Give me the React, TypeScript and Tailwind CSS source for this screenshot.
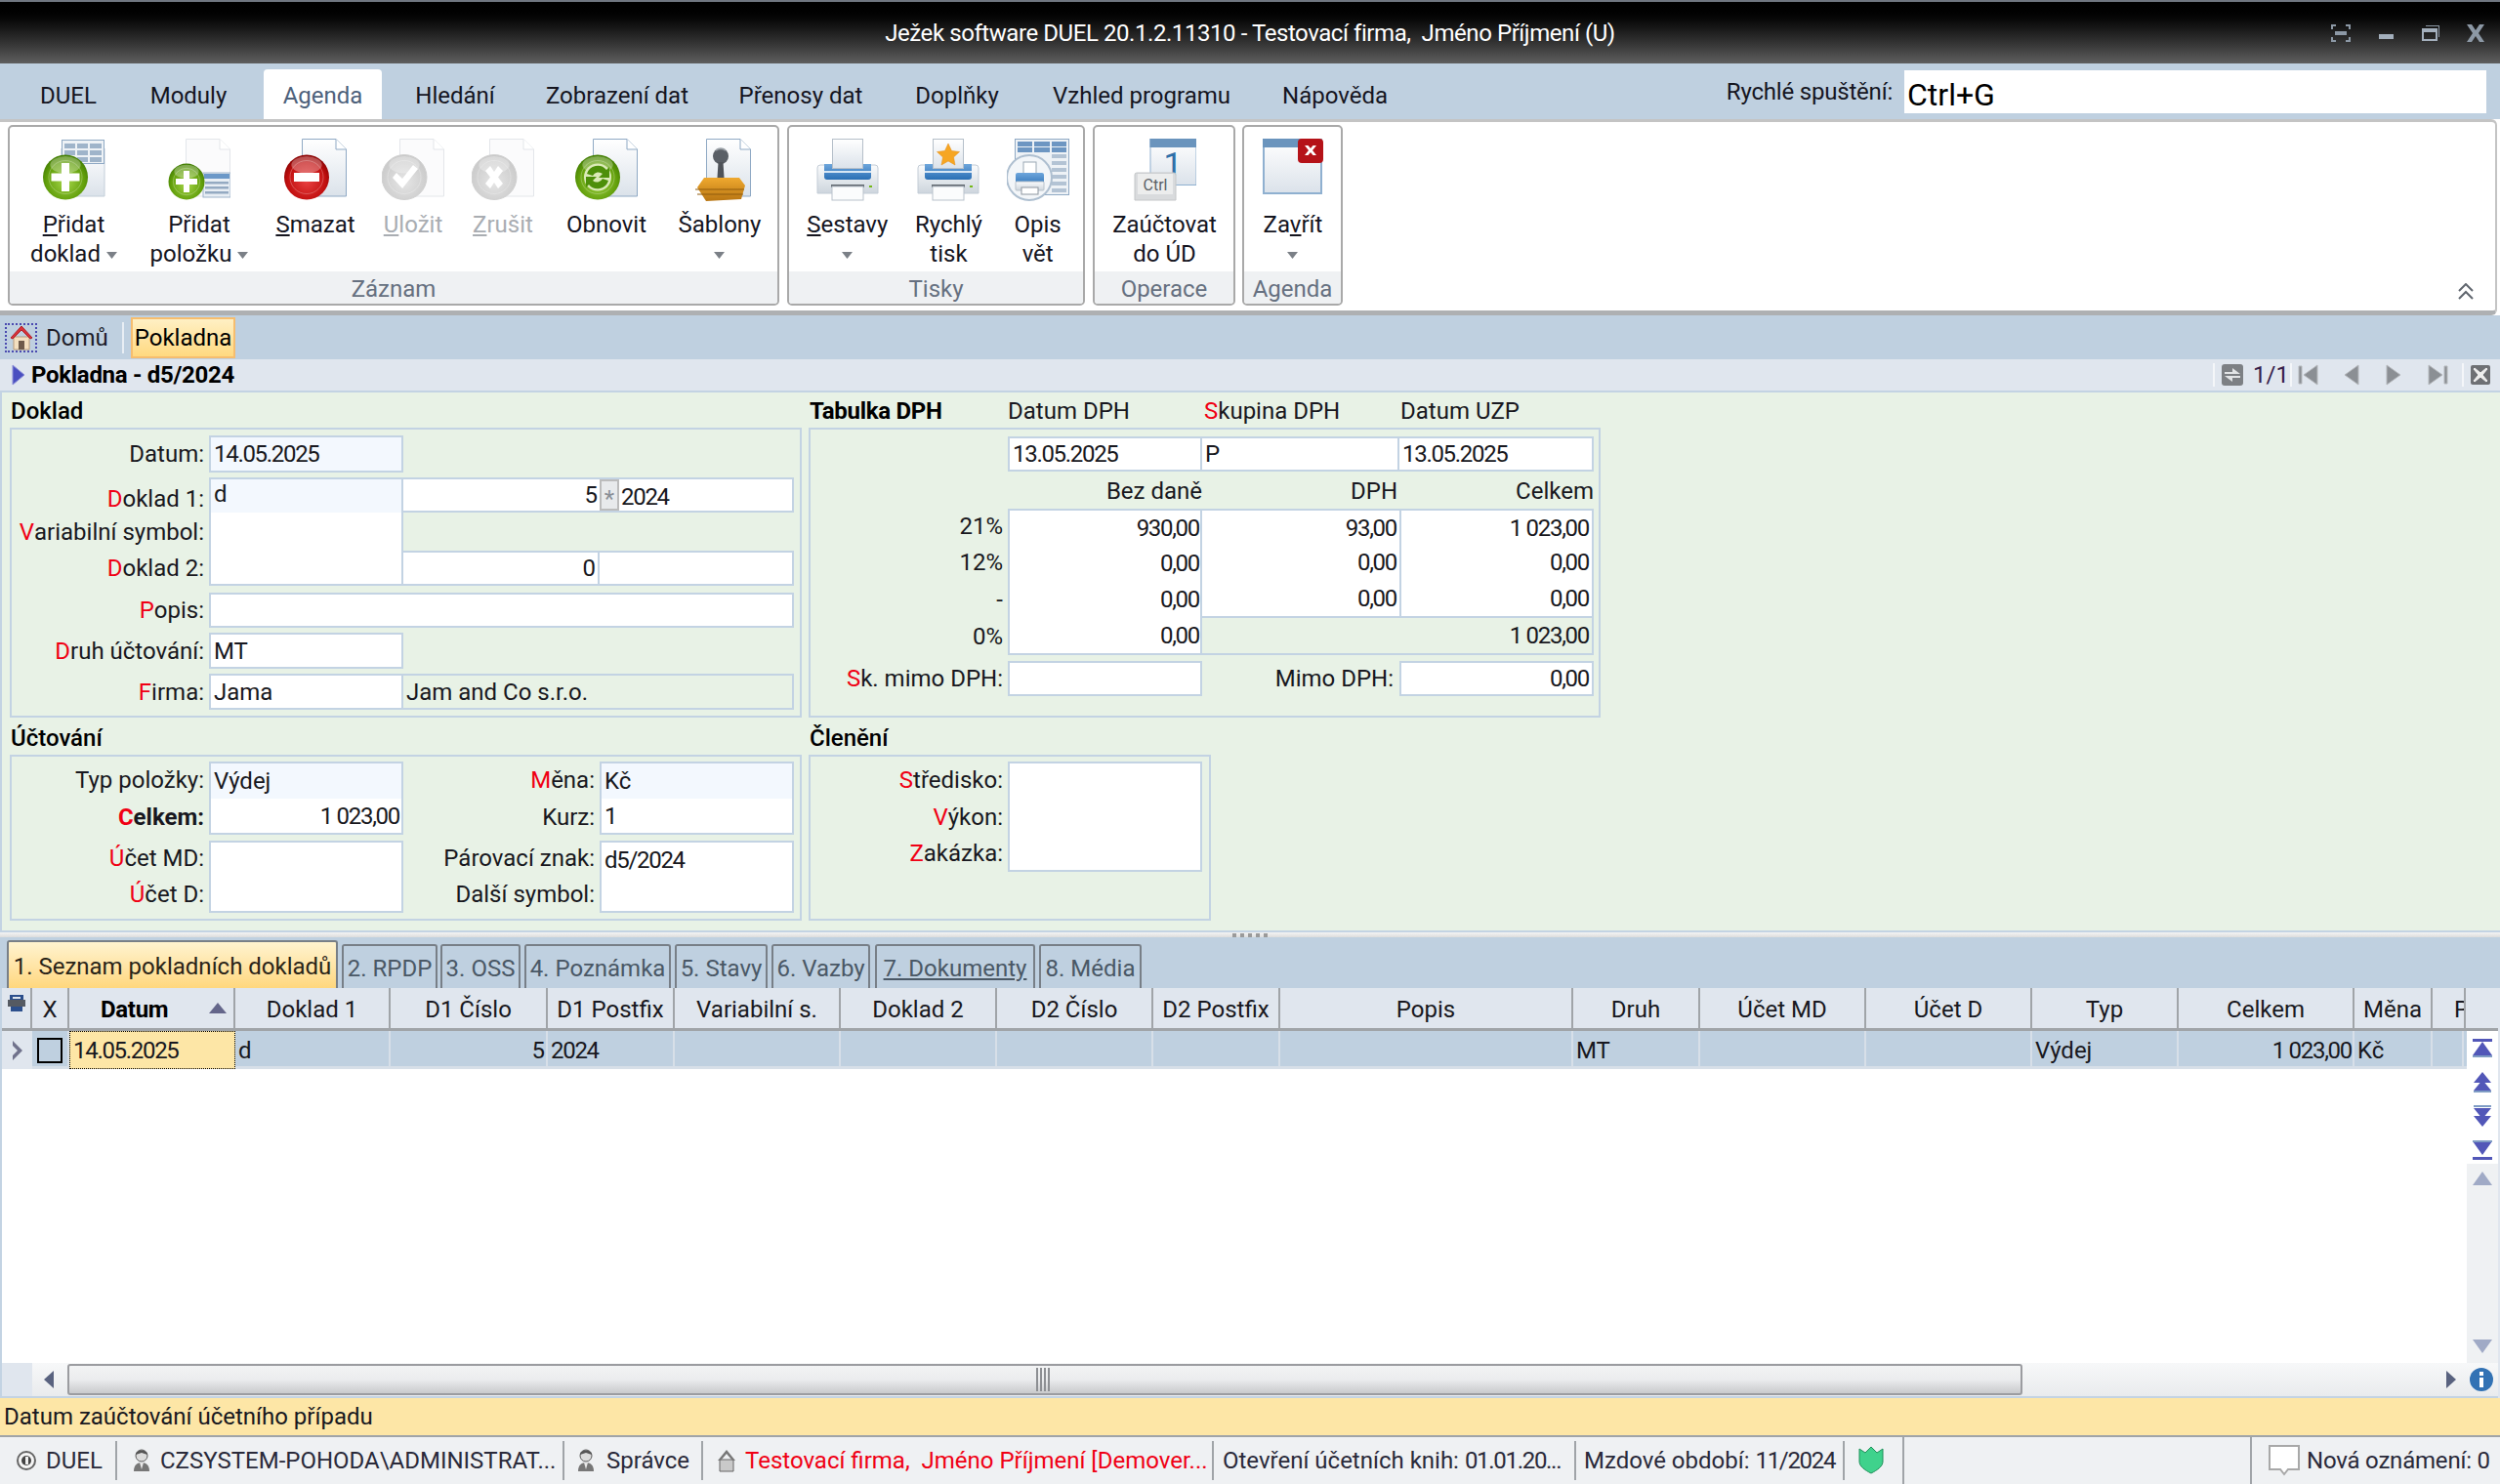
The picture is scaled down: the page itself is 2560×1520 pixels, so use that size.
import React from "react";

const HEADER_COLS = "grid-cols-[31px_38px_170px_159px_161px_130px_170px_160px_160px_130px_300px_130px_170px_170px_150px_180px_80px_34px_32px]";
const ROW_COLS = "grid-cols-[31px_38px_170px_159px_161px_130px_170px_160px_160px_130px_300px_130px_170px_170px_150px_180px_80px_32px]";
const NUM = "tracking-[-1.3px]";

const COLUMNS = ["", "X", "Datum", "Doklad 1", "D1 Číslo", "D1 Postfix", "Variabilní s.", "Doklad 2", "D2 Číslo", "D2 Postfix", "Popis", "Druh", "Účet MD", "Účet D", "Typ", "Celkem", "Měna", "P", ""];

function Gradients() {
  return (
    <svg className="absolute h-0 w-0" aria-hidden="true">
      <defs>
        <radialGradient id="g-green" cx="50%" cy="60%" r="60%">
          <stop offset="0" stopColor="#a6d64a" />
          <stop offset="0.7" stopColor="#63a00c" />
          <stop offset="1" stopColor="#3f7a00" />
        </radialGradient>
        <radialGradient id="g-red" cx="50%" cy="60%" r="60%">
          <stop offset="0" stopColor="#e84040" />
          <stop offset="0.7" stopColor="#c21010" />
          <stop offset="1" stopColor="#850000" />
        </radialGradient>
        <radialGradient id="g-gray" cx="50%" cy="60%" r="60%">
          <stop offset="0" stopColor="#e6e6e6" />
          <stop offset="1" stopColor="#c8c8c8" />
        </radialGradient>
        <linearGradient id="g-page" x1="0" y1="0" x2="0" y2="1">
          <stop offset="0" stopColor="#ffffff" />
          <stop offset="1" stopColor="#dbe2ea" />
        </linearGradient>
        <linearGradient id="g-blue" x1="0" y1="0" x2="0" y2="1">
          <stop offset="0" stopColor="#6ea6dc" />
          <stop offset="1" stopColor="#2a6fb5" />
        </linearGradient>
        <linearGradient id="g-body" x1="0" y1="0" x2="0" y2="1">
          <stop offset="0" stopColor="#fafbfc" />
          <stop offset="1" stopColor="#cdd5dd" />
        </linearGradient>
        <linearGradient id="g-stamp" x1="0" y1="0" x2="0" y2="1">
          <stop offset="0" stopColor="#efa92f" />
          <stop offset="1" stopColor="#b87512" />
        </linearGradient>
      </defs>
    </svg>
  );
}

function Page({ muted = false }: { muted?: boolean }) {
  const line = muted ? "#e3e6ea" : "#8fa9c4";
  return (
    <g>
      <path d="M18.5 .5H53L63.5 11V59H18.5Z" fill={muted ? "#fbfbfc" : "url(#g-page)"} stroke={line} />
      <path d="M53 .5V11H63.5" fill="#fff" stroke={line} />
    </g>
  );
}

function Ball({ fill, cx = 23, cy = 39.5, r = 23 }: { fill: string; cx?: number; cy?: number; r?: number }) {
  return (
    <g>
      <circle cx={cx} cy={cy} r={r} fill={`url(#${fill})`} stroke={fill === "g-gray" ? "#d0d0d0" : "none"} />
      <ellipse cx={cx} cy={cy - r * 0.55} rx={r * 0.68} ry={r * 0.38} fill="#fff" opacity="0.3" />
      <circle cx={cx} cy={cy} r={r * 0.74} fill="none" stroke="#fff" strokeOpacity="0.25" />
    </g>
  );
}

function Icon({ children, w = 64 }: { children: React.ReactNode; w?: number }) {
  return (
    <svg width={w} height="64" viewBox="0 0 64 64" className="block">
      {children}
    </svg>
  );
}

function AddDocIcon() {
  return (
    <Icon>
      <path d="M19 10H63V59H19Z" fill="url(#g-page)" stroke="#c3ced9" />
      <rect x="19.5" y="1.5" width="43" height="24" fill="#eef2f6" stroke="#8fa9c4" />
      {[5, 12, 19].map((y) => (
        <g key={y}>
          <rect x="22" y={y} width="11" height="5" fill="#9fb4ca" />
          <rect x="35" y={y} width="11" height="5" fill="#9fb4ca" />
          <rect x="48" y={y} width="12" height="5" fill="#9fb4ca" />
        </g>
      ))}
      <Ball fill="g-green" />
      <path d="M19 25h8v10.5h10.5v8H27V54h-8V43.5H8.5v-8H19Z" fill="#fff" />
    </Icon>
  );
}

function AddItemIcon() {
  return (
    <Icon>
      <Page muted />
      <rect x="36" y="35" width="28" height="25" fill="#e8eef4" stroke="#9fb4ca" />
      <rect x="37" y="36" width="26" height="5" fill="#6b98c8" />
      {[44, 49, 54].map((y) => (
        <rect key={y} x="38" y={y} width="24" height="2.5" fill="#94aac2" />
      ))}
      <Ball fill="g-green" cx={19} cy={44} r={18.5} />
      <path d="M16 33h6v8h8v6h-8v8h-6v-8H8v-6h8Z" fill="#fff" />
    </Icon>
  );
}

function DeleteIcon() {
  return (
    <Icon>
      <Page />
      <Ball fill="g-red" />
      <rect x="10" y="35" width="26" height="9" fill="#fff" />
    </Icon>
  );
}

function SaveDisabledIcon() {
  return (
    <Icon>
      <Page muted />
      <Ball fill="g-gray" />
      <path d="M11 40l4-5 6 6 11-14 5 4-16 20Z" fill="#fff" />
    </Icon>
  );
}

function CancelDisabledIcon() {
  return (
    <Icon>
      <Page muted />
      <Ball fill="g-gray" />
      <path d="M14 33l5-5 4 6 4-6 5 5-5 6.500 5 6.500-5 5-4-6-4 6-5-5 5-6.500Z" fill="#fff" />
    </Icon>
  );
}

function RefreshIcon() {
  return (
    <Icon>
      <Page />
      <Ball fill="g-green" />
      <circle cx="23" cy="39.500" r="14" fill="#dbeab8" />
      <path d="M12 36a11.500 11.500 0 0 1 20-4l3-3v11H24l4-4a6.500 6.500 0 0 0-10 2Z" fill="#4d8f0a" />
      <path d="M34 43a11.500 11.500 0 0 1-20 4l-3 3V39h11l-4 4a6.500 6.500 0 0 0 10-2Z" fill="#4d8f0a" />
    </Icon>
  );
}

function TemplateIcon() {
  return (
    <Icon>
      <Page />
      <circle cx="33" cy="18" r="8" fill="#5a5f66" />
      <path d="M28 12c3-2 7-2 10 0" fill="none" stroke="#9aa0a6" strokeWidth="2" />
      <path d="M30.500 24h5l1 16h-7Z" fill="#4f5359" />
      <path d="M9 50l7-10h36l6 8-4 14-36 2Z" fill="url(#g-stamp)" />
      <path d="M7 52h50M9 57h47" stroke="#8f5a0c" strokeWidth="1" fill="none" />
    </Icon>
  );
}

function PrinterBase() {
  return (
    <g>
      <path d="M1 30a3 3 0 0 1 3-3h56a3 3 0 0 1 3 3v26H1Z" fill="url(#g-body)" stroke="#c3ccd6" />
      <path d="M8 26h48v13a3 3 0 0 1-3 3H11a3 3 0 0 1-3-3Z" fill="url(#g-blue)" />
      <rect x="8" y="33" width="48" height="2" fill="#d7e6f4" />
      <rect x="15" y="47" width="34" height="3" fill="#60676e" />
      <rect x="16" y="49" width="32" height="14" fill="#fbfcfd" stroke="#b9c2cb" />
      <rect x="54" y="48" width="3" height="2" fill="#74b816" />
    </g>
  );
}

function PrinterIcon({ star = false }: { star?: boolean }) {
  return (
    <Icon>
      <PrinterBase />
      <rect x="16.500" y=".5" width="31" height="30" fill="url(#g-page)" stroke="#b5bfc9" />
      {star && <path d="M32 5l3.500 7.500 8 1-6 5.500 1.500 8-7-4-7 4 1.500-8-6-5.500 8-1Z" fill="#f6a623" stroke="#e58a10" strokeWidth=".5" />}
    </Icon>
  );
}

function DescribeIcon() {
  return (
    <Icon>
      <rect x="8.500" y=".5" width="55" height="57" fill="#eef2f6" stroke="#8fa9c4" />
      {[3, 9].map((y) => (
        <g key={y}>
          <rect x="11" y={y} width="15" height="5" fill="#6d96c2" />
          <rect x="28" y={y} width="16" height="5" fill="#6d96c2" />
          <rect x="46" y={y} width="15" height="5" fill="#6d96c2" />
        </g>
      ))}
      {[16, 23, 30, 37, 44, 51].map((y) => (
        <rect key={y} x="46" y={y} width="15" height="4" fill="#b3c3d4" />
      ))}
      <circle cx="23" cy="40" r="23" fill="#f3f6f9" stroke="#aebfd0" strokeWidth="2" />
      <rect x="17" y="24" width="13" height="13" fill="#fff" stroke="#9aa7b4" />
      <rect x="9" y="35" width="29" height="14" rx="2" fill="url(#g-blue)" />
      <rect x="9" y="44" width="29" height="9" rx="1" fill="url(#g-body)" stroke="#b9c2cb" />
      <rect x="15" y="50" width="17" height="7" fill="#fff" stroke="#8d969f" />
    </Icon>
  );
}

function PostIcon() {
  return (
    <Icon>
      <rect x="17" y=".5" width="47" height="47" fill="url(#g-page)" stroke="#8fb0d0" />
      <rect x="16.500" y="0" width="47.500" height="9" fill="#6a94bd" />
      <text x="40" y="38" fontSize="34" fontFamily="Roboto, sans-serif" fill="#2f6fa8" textAnchor="middle">1</text>
      <path d="M1 37a2 2 0 0 1 2-2h38a2 2 0 0 1 2 2v26H1Z" fill="#d9dbdd" stroke="#c4c6c8" />
      <rect x="4" y="36" width="36" height="21" fill="#eceded" />
      <text x="22" y="53" fontSize="16" fontFamily="Roboto, sans-serif" fill="#5a5f66" textAnchor="middle">Ctrl</text>
    </Icon>
  );
}

function CloseWindowIcon() {
  return (
    <Icon>
      <rect x="2" y="1" width="59" height="55" fill="url(#g-page)" stroke="#8fb0d0" strokeWidth="2" />
      <rect x="1" y="0" width="54" height="9" fill="#6a94bd" />
      <rect x="37" y="0" width="26" height="25" rx="4" fill="#b51218" />
      <path d="M44 7h3.500l2.500 3 2.500-3H56l-4 5 4 5h-3.500L50 14l-2.500 3H44l4-5Z" fill="#fff" />
    </Icon>
  );
}

function DropArrow() {
  return (
    <svg width="11" height="8" viewBox="0 0 11 8" className="inline-block">
      <path d="M0 0h11L5.500 7Z" fill="#7b8087" />
    </svg>
  );
}

function RibbonButton({ icon, w, disabled, children }: { icon: React.ReactNode; w: string; disabled?: boolean; children: React.ReactNode }) {
  return (
    <div className={`flex ${w} flex-col items-center pt-[12px]`}>
      <div className="h-[64px]">{icon}</div>
      <div className={`mt-[9px] text-center leading-[30px] ${disabled ? "text-[#a9adb2]" : "text-[#15151f]"}`}>{children}</div>
    </div>
  );
}

function RibbonGroup({ title, w, children }: { title: string; w: string; children: React.ReactNode }) {
  return (
    <div className={`${w} flex h-[185px] flex-col overflow-hidden rounded-[5px] border-2 border-[#a9a9a9] bg-white`}>
      <div className="flex h-[148px] pl-px">{children}</div>
      <div className="flex h-[33px] items-center justify-center bg-[#eff1f3] pt-[3px] text-[#667080]">{title}</div>
    </div>
  );
}

function Ribbon() {
  return (
    <div className="mr-[3px] flex h-[201px] rounded-r-[6px] border-t-[3px] border-r-2 border-b-[5px] border-t-[#c4c4c4] border-r-[#c4c4c4] border-b-[#aeb0b2] bg-white pl-[8px] pt-[3px]">
      <RibbonGroup title="Záznam" w="w-[790px]">
        <RibbonButton w="w-[129px]" icon={<AddDocIcon />}><u>P</u>řidat<br />doklad <DropArrow /></RibbonButton>
        <RibbonButton w="w-[128px]" icon={<AddItemIcon />}>Přidat<br />položku <DropArrow /></RibbonButton>
        <RibbonButton w="w-[110px]" icon={<DeleteIcon />}><u>S</u>mazat</RibbonButton>
        <RibbonButton w="w-[90px]" disabled icon={<SaveDisabledIcon />}><u>U</u>ložit</RibbonButton>
        <RibbonButton w="w-[94px]" disabled icon={<CancelDisabledIcon />}><u>Z</u>rušit</RibbonButton>
        <RibbonButton w="w-[118px]" icon={<RefreshIcon />}>Obnovit</RibbonButton>
        <RibbonButton w="w-[114px]" icon={<TemplateIcon />}>Šablony<br /><DropArrow /></RibbonButton>
      </RibbonGroup>
      <div className="ml-[8px]">
        <RibbonGroup title="Tisky" w="w-[305px]">
          <RibbonButton w="w-[118px]" icon={<PrinterIcon />}><u>S</u>estavy<br /><DropArrow /></RibbonButton>
          <RibbonButton w="w-[90px]" icon={<PrinterIcon star />}>Rychlý<br />tisk</RibbonButton>
          <RibbonButton w="w-[93px]" icon={<DescribeIcon />}>Opis<br />vět</RibbonButton>
        </RibbonGroup>
      </div>
      <div className="ml-[8px]">
        <RibbonGroup title="Operace" w="w-[146px]">
          <RibbonButton w="w-[142px]" icon={<PostIcon />}>Zaúčtovat<br />do ÚD</RibbonButton>
        </RibbonGroup>
      </div>
      <div className="ml-[7px]">
        <RibbonGroup title="Agenda" w="w-[103px]">
          <RibbonButton w="w-[99px]" icon={<CloseWindowIcon />}>Za<u>v</u>řít<br /><DropArrow /></RibbonButton>
        </RibbonGroup>
      </div>
      <div className="mb-[10px] ml-auto mr-[22px] self-end">
        <svg width="16" height="18" viewBox="0 0 16 18">
          <path d="M1 8l7-7 7 7M1 16l7-7 7 7" fill="none" stroke="#60666e" strokeWidth="2" />
        </svg>
      </div>
    </div>
  );
}

function WindowButtons() {
  return (
    <div className="flex items-center justify-end pr-[16px]">
      <svg width="20" height="18" viewBox="0 0 20 18" className="mr-[29px]">
        <path d="M1 5V1h4M15 1h4v4M19 13v4h-4M5 17H1v-4" fill="none" stroke="#8c98a5" strokeWidth="2" />
        <rect x="4" y="7" width="12" height="4" fill="#8c98a5" />
      </svg>
      <svg width="15" height="6" viewBox="0 0 15 6" className="mr-[29px] mt-[8px]">
        <rect width="15" height="5" fill="#a3afbc" />
      </svg>
      <svg width="18" height="16" viewBox="0 0 18 16" className="mr-[28px]">
        <path d="M4 0h14v12" fill="none" stroke="#8c98a5" strokeWidth="2" />
        <rect x="1" y="4" width="14" height="11" fill="none" stroke="#a3afbc" strokeWidth="2" />
        <rect x="1" y="4" width="14" height="3" fill="#a3afbc" />
      </svg>
      <svg width="18" height="18" viewBox="0 0 18 18">
        <path d="M0 0h5l4 6 4-6h5l-6 9 6 9h-5l-4-6-4 6H0l6-9Z" fill="#8c98a5" />
      </svg>
    </div>
  );
}

function TitleBar() {
  return (
    <div className="grid h-[65px] grid-cols-[1fr_auto_1fr] items-center border-t-2 border-t-[#6f7680] bg-gradient-to-b from-[#000000] to-[#5f5f5f]">
      <div />
      <div className="whitespace-pre tracking-[-0.43px] text-white">Ježek software DUEL 20.1.2.11310 - Testovací firma,  Jméno Příjmení (U)</div>
      <WindowButtons />
    </div>
  );
}

function MenuRow() {
  return (
    <div className="flex h-[57px] bg-[#bfd0e0] pl-[16px] text-[#15151f]">
      <div className="flex w-[108px] items-center justify-center pt-[9px]">DUEL</div>
      <div className="flex w-[138px] items-center justify-center pt-[9px]">Moduly</div>
      <div className="ml-[8px] mt-[6px] flex w-[121px] items-center justify-center rounded-t-[4px] bg-white pt-[3px] text-[#4d617b]">Agenda</div>
      <div className="flex w-[150px] items-center justify-center pt-[9px]">Hledání</div>
      <div className="flex w-[182px] items-center justify-center pt-[9px]">Zobrazení dat</div>
      <div className="flex w-[194px] items-center justify-center pt-[9px]">Přenosy dat</div>
      <div className="flex w-[126px] items-center justify-center pt-[9px]">Doplňky</div>
      <div className="flex w-[252px] items-center justify-center pt-[9px]">Vzhled programu</div>
      <div className="flex w-[144px] items-center justify-center pt-[9px]">Nápověda</div>
      <div className="ml-auto flex items-start">
        <span className="mr-[12px] mt-[11px] tracking-[-0.2px]">Rychlé spuštění:</span>
        <div className="mr-[14px] mt-[7px] flex h-[44px] w-[596px] items-center bg-white pl-[3px] pt-[5px] text-[32px] text-black">Ctrl+G</div>
      </div>
    </div>
  );
}

function NavIcon({ d, className }: { d: string; className: string }) {
  return (
    <svg width="22" height="22" viewBox="0 0 22 22" className={className}>
      <path d={d} fill="#8b8f94" stroke="#b5b8bc" />
    </svg>
  );
}

function TabStrip() {
  return (
    <div className="flex h-[45px] items-center bg-[#bfd0e0] pl-[5px] text-[#1c1c28]">
      <div className="flex h-[30px] w-[33px] items-center justify-center border-2 border-dotted border-[#4a4ab0]">
        <svg width="24" height="26" viewBox="0 0 24 26">
          <path d="M4 12h16v13H4Z" fill="#f3dfc0" stroke="#b99a78" />
          <rect x="9" y="16" width="6" height="9" fill="#6e5a4a" />
          <path d="M12 1L1 13l2 1L12 5l9 9 2-1Z" fill="#d8323a" stroke="#b02028" />
        </svg>
      </div>
      <span className="ml-[9px] w-[66px]">Domů</span>
      <div className="ml-[12px] h-[32px] w-[2px] bg-[#e8eef4]" />
      <div className="ml-[7px] flex h-[42px] w-[107px] items-center justify-center border-2 border-[#f6bd6e] bg-gradient-to-b from-[#fff0c4] to-[#ffd97f] text-black">Pokladna</div>
    </div>
  );
}

function RecordBar() {
  return (
    <div className="flex h-[32px] items-center bg-[#e0e6ee] pl-[12px]">
      <svg width="14" height="22" viewBox="0 0 14 22">
        <path d="M1 1l12 10L1 21Z" fill="#4a4fc0" stroke="#8d90d8" />
      </svg>
      <span className="ml-[6px] font-bold tracking-[-0.3px] text-black">Pokladna - d5/2024</span>
      <div className="ml-auto flex items-center pr-[10px]">
        <div className="mr-[7px] h-[24px] w-[2px] bg-[#f4f6f9]" />
        <svg width="22" height="22" viewBox="0 0 22 22">
          <rect width="22" height="22" rx="3" fill="#7d8084" />
          <path d="M3 8h8V4l8 6h-16M19 14h-8v4l-8-6h16" fill="#e2e4e6" />
        </svg>
        <span className="ml-[10px] w-[30px] text-[#36204a]">1/1</span>
        <div className="ml-[8px] mr-[6px] h-[24px] w-[2px] bg-[#f4f6f9]" />
        <NavIcon className="mr-[23px]" d="M1 2h3v18H1ZM20 1v20L6 11Z" />
        <NavIcon className="mr-[20px]" d="M17 1v20L3 11Z" />
        <NavIcon className="mr-[23px]" d="M4 1v20L18 11Z" />
        <NavIcon className="mr-[14px]" d="M2 1v20L16 11ZM18 2h3v18h-3Z" />
        <div className="mr-[7px] h-[24px] w-[2px] bg-[#f4f6f9]" />
        <svg width="20" height="20" viewBox="0 0 20 20">
          <rect width="20" height="20" rx="2" fill="#6e7074" />
          <path d="M4 3l6 5 6-5 1 1-5 6 5 6-1 1-6-5-6 5-1-1 5-6-5-6Z" fill="#eeeeee" stroke="#eeeeee" />
        </svg>
      </div>
    </div>
  );
}

function Label({ red, text, bold, className = "" }: { red?: string; text: string; bold?: boolean; className?: string }) {
  return (
    <div className={`flex items-center justify-end whitespace-pre text-[#181820] ${bold ? "font-bold" : ""} ${className}`}>
      <span className="text-[#f00014]">{red}</span>
      {text}
    </div>
  );
}

function Cell({ children, className = "" }: { children?: React.ReactNode; className?: string }) {
  return <div className={`flex items-center whitespace-pre border-2 border-[#c3d3e3] px-[3px] text-[#181820] ${className}`}>{children}</div>;
}

function Section({ title, bold, className = "", head, children }: { title: string; bold?: boolean; className?: string; head?: React.ReactNode; children: React.ReactNode }) {
  return (
    <div className={className}>
      <div className="flex h-[38px] items-center pt-[4px] pl-px">
        <span className={`text-black ${bold ? "w-[203px] font-bold tracking-[-0.3px]" : "font-medium"}`}>{title}</span>
        {head}
      </div>
      {children}
    </div>
  );
}

function DokladBox() {
  return (
    <div className="grid h-[297px] grid-cols-[197px_5px_199px_201px_199px] grid-rows-[38px_5px_36px_39px_36px_7px_36px_5px_37px_5px_37px] border-2 border-[#c3d3e3] pt-[6px]">
      <Label className="col-start-1 row-start-1" text="Datum:" />
      <Cell className={`col-start-3 row-start-1 bg-[#f3f8fe] ${NUM}`}>14.05.2025</Cell>

      <Label className="col-start-1 row-start-3 pt-[8px]" red="D" text="oklad 1:" />
      <Label className="col-start-1 row-start-4" red="V" text="ariabilní symbol:" />
      <Label className="col-start-1 row-start-5" red="D" text="oklad 2:" />
      <div className="col-start-3 row-span-3 row-start-3 flex flex-col border-2 border-[#c3d3e3] bg-white">
        <div className="flex h-[34px] bg-[#f3f8fe] pl-[3px] leading-[30px] text-[#181820]">d</div>
      </div>
      <Cell className="col-start-4 row-start-3 justify-end border-l-0 border-r-0 bg-white !px-[2px]">5</Cell>
      <div className="col-start-5 row-start-3 flex overflow-hidden border-2 border-l-0 border-[#c3d3e3] bg-white">
        <div className="flex h-full w-[20px] justify-center border-2 border-[#bcbcbc] bg-[#e8eaec] text-[#8a8f96]">*</div>
        <span className={`pl-[2px] text-[#181820] ${NUM}`}>2024</span>
      </div>
      <Cell className="col-start-4 row-start-5 justify-end border-l-0 bg-white !px-[2px]">0</Cell>
      <Cell className="col-start-5 row-start-5 border-l-0 bg-white" />

      <Label className="col-start-1 row-start-7" red="P" text="opis:" />
      <Cell className="col-span-3 col-start-3 row-start-7 bg-white" />

      <Label className="col-start-1 row-start-9" red="D" text="ruh účtování:" />
      <Cell className="col-start-3 row-start-9 bg-white">MT</Cell>

      <Label className="col-start-1 row-start-11" red="F" text="irma:" />
      <Cell className="col-start-3 row-start-11 bg-white">Jama</Cell>
      <Cell className="col-span-2 col-start-4 row-start-11 border-l-0">Jam and Co s.r.o.</Cell>
    </div>
  );
}

function ValueColumn({ rows, pad, className = "" }: { rows: [string, string][]; pad: string; className?: string }) {
  return (
    <div className={`flex flex-col border-2 border-[#c3d3e3] bg-white ${className}`}>
      {rows.map(([h, v], i) => (
        <div key={i} className={`flex ${h} ${pad} items-center justify-end text-[#181820] ${NUM}`}>{v}</div>
      ))}
    </div>
  );
}

function DphBox() {
  return (
    <div className="grid h-[297px] grid-cols-[197px_5px_199px_202px_199px] grid-rows-[36px_38px_36px_37px_39px_38px_6px_36px] border-2 border-[#c3d3e3] pt-[7px]">
      <Cell className={`col-start-3 row-start-1 bg-white ${NUM}`}>13.05.2025</Cell>
      <Cell className="col-start-4 row-start-1 border-l-0 bg-white">P</Cell>
      <Cell className={`col-start-5 row-start-1 border-l-0 bg-white ${NUM}`}>13.05.2025</Cell>

      <div className="col-start-3 row-start-2 flex items-center justify-end pt-[2px] text-[#181820]">Bez daně</div>
      <div className="col-start-4 row-start-2 flex items-center justify-end pr-[2px] pt-[2px] text-[#181820]">DPH</div>
      <div className="col-start-5 row-start-2 flex items-center justify-end pt-[2px] text-[#181820]">Celkem</div>

      <Label className="col-start-1 row-start-3" text="21%" />
      <Label className="col-start-1 row-start-4" text="12%" />
      <Label className="col-start-1 row-start-5" text="-" />
      <Label className="col-start-1 row-start-6" text="0%" />

      <ValueColumn
        pad="pr-[1px]"
        className="col-start-3 row-span-4 row-start-3"
        rows={[["h-[35px]", "930,00"], ["h-[37px]", "0,00"], ["h-[38px]", "0,00"], ["h-[36px]", "0,00"]]}
      />
      <ValueColumn
        pad="pr-[3px]"
        className="col-start-4 row-span-3 row-start-3 border-l-0 border-r-0"
        rows={[["h-[35px]", "93,00"], ["h-[37px]", "0,00"], ["h-[38px]", "0,00"]]}
      />
      <ValueColumn
        pad="pr-[3px]"
        className="col-start-5 row-span-3 row-start-3"
        rows={[["h-[35px]", "1 023,00"], ["h-[37px]", "0,00"], ["h-[38px]", "0,00"]]}
      />
      <Cell className={`col-span-2 col-start-4 row-start-6 justify-end border-l-0 border-t-0 ${NUM}`}>1 023,00</Cell>

      <Label className="col-start-1 row-start-8" red="S" text="k. mimo DPH:" />
      <Cell className="col-start-3 row-start-8 bg-white" />
      <Label className="col-start-4 row-start-8 pr-[6px]" text="Mimo DPH:" />
      <Cell className={`col-start-5 row-start-8 justify-end bg-white ${NUM}`}>0,00</Cell>
    </div>
  );
}

function UctovaniBox() {
  return (
    <div className="grid h-[170px] grid-cols-[197px_5px_199px_196px_5px_199px] grid-rows-[38px_37px_6px_36px_38px] border-2 border-[#c3d3e3] pt-[5px]">
      <Label className="col-start-1 row-start-1" text="Typ položky:" />
      <Label className="col-start-1 row-start-2" red="C" text="elkem:" bold />
      <Label className="col-start-1 row-start-4" red="Ú" text="čet MD:" />
      <Label className="col-start-1 row-start-5" red="Ú" text="čet D:" />
      <div className="col-start-3 row-span-2 row-start-1 flex flex-col border-2 border-[#c3d3e3] bg-white text-[#181820]">
        <div className="flex h-[36px] items-center bg-[#f3f8fe] pl-[3px]">Výdej</div>
        <div className={`flex h-[35px] items-center justify-end pr-[2px] ${NUM}`}>1 023,00</div>
      </div>
      <Cell className="col-start-3 row-span-2 row-start-4 bg-white" />

      <Label className="col-start-4 row-start-1" red="M" text="ěna:" />
      <Label className="col-start-4 row-start-2" text="Kurz:" />
      <Label className="col-start-4 row-start-4" text="Párovací znak:" />
      <Label className="col-start-4 row-start-5" text="Další symbol:" />
      <div className="col-start-6 row-span-2 row-start-1 flex flex-col border-2 border-[#c3d3e3] bg-white text-[#181820]">
        <div className="flex h-[36px] items-center bg-[#f3f8fe] pl-[3px]">Kč</div>
        <div className="flex h-[35px] items-center pl-[3px]">1</div>
      </div>
      <div className={`col-start-6 row-span-2 row-start-4 flex flex-col border-2 border-[#c3d3e3] bg-white pl-[3px] text-[#181820] ${NUM}`}>d5/2024</div>
    </div>
  );
}

function CleneniBox() {
  return (
    <div className="grid h-[170px] w-[412px] grid-cols-[197px_5px_199px] grid-rows-[38px_37px_38px] border-2 border-[#c3d3e3] pt-[5px]">
      <Label className="col-start-1 row-start-1" red="S" text="tředisko:" />
      <Label className="col-start-1 row-start-2" red="V" text="ýkon:" />
      <Label className="col-start-1 row-start-3" red="Z" text="akázka:" />
      <Cell className="col-start-3 row-span-3 row-start-1 bg-white" />
    </div>
  );
}

function FormPanel() {
  return (
    <div className="h-[555px] border-y-2 border-l-2 border-[#c3d3e3] bg-[#e8f2e6] pl-[8px]">
      <div className="-mt-[2px] flex gap-[7px]">
        <Section title="Doklad" className="w-[811px]"><DokladBox /></Section>
        <Section
          title="Tabulka DPH"
          bold
          className="w-[811px]"
          head={
            <div className="flex text-[#181820]">
              <span className="w-[201px]">Datum DPH</span>
              <span className="w-[201px]"><span className="text-[#f00014]">S</span>kupina DPH</span>
              <span>Datum UZP</span>
            </div>
          }
        >
          <DphBox />
        </Section>
      </div>
      <div className="flex gap-[7px]">
        <Section title="Účtování" className="w-[811px]"><UctovaniBox /></Section>
        <Section title="Členění"><CleneniBox /></Section>
      </div>
    </div>
  );
}

function Splitter() {
  return (
    <div className="flex h-[5px] items-center justify-center gap-[4px] bg-gradient-to-b from-[#f4f4f4] to-[#dcdcdc]">
      {[0, 1, 2, 3, 4].map((i) => (
        <span key={i} className="h-[4px] w-[4px] bg-[#9a9a9a]" />
      ))}
    </div>
  );
}

function DetailTab({ w, children, ml = "ml-[3px]" }: { w: string; children: React.ReactNode; ml?: string }) {
  return (
    <div className={`${w} ${ml} mt-[7px] flex items-center justify-center whitespace-pre rounded-t-[3px] border-x-2 border-t-2 border-[#787f87] pt-[2px] text-[#4a5866]`}>
      {children}
    </div>
  );
}

function DetailTabs() {
  return (
    <div className="flex h-[52px] bg-[#bfd0e0] pl-[7px]">
      <div className="mt-[3px] flex w-[339px] items-center justify-center whitespace-pre rounded-t-[3px] border-x-2 border-t-2 border-[#787f87] bg-gradient-to-b from-[#fff3cf] to-[#ffd77d] pt-[2px] text-[#2a2418]">
        1. Seznam pokladních dokladů
      </div>
      <DetailTab w="w-[98px]" ml="ml-[4px]">2. RPDP</DetailTab>
      <DetailTab w="w-[82px]">3. OSS</DetailTab>
      <DetailTab w="w-[150px]" ml="ml-[4px]">4. Poznámka</DetailTab>
      <DetailTab w="w-[95px]" ml="ml-[4px]">5. Stavy</DetailTab>
      <DetailTab w="w-[101px]" ml="ml-[4px]">6. Vazby</DetailTab>
      <DetailTab w="w-[164px]" ml="ml-[5px]"><u>7. Dokumenty</u></DetailTab>
      <DetailTab w="w-[105px]" ml="ml-[4px]">8. Média</DetailTab>
    </div>
  );
}

function TableHeader() {
  return (
    <div className={`grid h-[44px] ${HEADER_COLS} border-b-[3px] border-[#a0a4a8] bg-[#e0e6ee] text-[#181820]`}>
      {COLUMNS.map((c, i) => (
        <div key={i} className={`flex items-center overflow-hidden whitespace-pre pt-[3px] ${i === 17 ? "justify-start pl-[22px]" : "justify-center"} ${i === 18 ? "" : "border-r-2 border-[#a0a4a8]"} ${i === 2 ? "font-bold text-black" : ""}`}>
          {i === 0 ? (
            <svg width="20" height="20" viewBox="0 0 20 20" className="-mt-[12px]">
              <rect x="3" y="1" width="14" height="6" fill="#2c4f8c" />
              <rect x="1" y="6" width="18" height="7" fill="#555a62" />
              <rect x="4" y="13" width="12" height="5" fill="#2c4f8c" />
              <rect x="6" y="3" width="8" height="2" fill="#dfe6ee" />
            </svg>
          ) : i === 2 ? (
            <div className="flex w-full items-center justify-between pl-[32px] pr-[7px]">
              <span className="tracking-[-0.3px]">Datum</span>
              <svg width="18" height="11" viewBox="0 0 18 11" className="-mt-[3px]">
                <path d="M9 0l9 11H0Z" fill="#64668a" />
              </svg>
            </div>
          ) : (
            c
          )}
        </div>
      ))}
    </div>
  );
}

function TableRow() {
  const rest = ["d", "5", "2024", "", "", "", "", "", "MT", "", "", "Výdej", "1 023,00", "Kč", ""];
  return (
    <div className={`grid h-[39px] ${ROW_COLS} border-b-[3px] border-[#d7dfe8] bg-[#bfd0e0] text-[#181820]`}>
      <div className="flex items-center bg-[#e0e6ee] pl-[10px]">
        <svg width="12" height="22" viewBox="0 0 12 22">
          <path d="M1 1l10 10L1 21l0-5 5-5-5-5Z" fill="#70728c" />
        </svg>
      </div>
      <div className="flex items-center justify-center border-r-2 border-[#d7dfe8]">
        <div className="h-[26px] w-[26px] border-2 border-black" />
      </div>
      <div className={`flex items-center border border-dotted border-black bg-[#fde6a6] pl-[3px] pt-[1px] ${NUM}`}>14.05.2025</div>
      {rest.map((v, i) => (
        <div key={i} className={`flex items-center whitespace-pre border-r-2 border-[#d7dfe8] px-[3px] pt-[1px] ${i === 1 || i === 12 ? "justify-end !pr-px" : ""} ${i === 2 || i === 12 ? NUM : ""}`}>{v}</div>
      ))}
    </div>
  );
}

function ScrollColumn() {
  const fill = "#5257b8";
  return (
    <div className="flex w-[32px] flex-col items-center">
      <div className="flex h-[136px] w-full flex-col items-center bg-white pt-[8px]">
        <svg width="22" height="20" viewBox="0 0 22 20" className="mb-[14px]"><path d="M1 0h20v3H1ZM11 3l10 14H1Z" fill={fill} /><rect x="1" y="17" width="20" height="2" fill="#7f9cc4" /></svg>
        <svg width="22" height="22" viewBox="0 0 22 22" className="mb-[12px]"><path d="M11 0l9 11H2ZM11 8l9 11H2Z" fill={fill} /><rect x="2" y="19" width="18" height="2" fill="#7f9cc4" /></svg>
        <svg width="22" height="22" viewBox="0 0 22 22" className="mb-[14px]"><rect x="2" y="0" width="18" height="2" fill="#7f9cc4" /><path d="M11 22l9-11H2ZM11 14l9-11H2Z" fill={fill} /></svg>
        <svg width="22" height="20" viewBox="0 0 22 20"><path d="M1 17h20v3H1ZM11 15L21 1H1Z" fill={fill} /><rect x="1" y="0" width="20" height="2" fill="#7f9cc4" /></svg>
      </div>
      <div className="flex w-full flex-1 flex-col items-center justify-between bg-[#eff1f3] pb-[10px] pt-[8px]">
        <svg width="20" height="14" viewBox="0 0 20 14"><path d="M10 0l10 14H0Z" fill="#a0aac6" /></svg>
        <svg width="20" height="14" viewBox="0 0 20 14"><path d="M10 14l10-14H0Z" fill="#a0aac6" /></svg>
      </div>
    </div>
  );
}

function HorizontalScroll() {
  return (
    <div className="flex h-[36px] border-b-2 border-[#c3d3e3] bg-gradient-to-b from-[#f7f8f9] to-[#e9ebed]">
      <div className="h-full w-[31px] bg-[#e0e6ee]" />
      <div className="flex w-[36px] items-center justify-center">
        <svg width="12" height="18" viewBox="0 0 12 18"><path d="M10 0v18L0 9Z" fill="#59627f" /></svg>
      </div>
      <div className="mt-[1px] flex h-[32px] w-[2002px] items-center justify-center rounded-[3px] border-2 border-[#9b9ca0] bg-gradient-to-b from-[#f2f3f4] via-[#ebecee] to-[#c9cacc] pr-[4px]">
        <div className="flex gap-[2px]">
          {[0, 1, 2, 3].map((i) => (
            <span key={i} className="h-[24px] w-[2px] bg-[#8d8f93]" />
          ))}
        </div>
      </div>
      <div className="flex flex-1 items-center justify-end pr-[8px]">
        <svg width="12" height="18" viewBox="0 0 12 18"><path d="M2 0v18L12 9Z" fill="#59627f" /></svg>
      </div>
      <div className="flex w-[35px] items-center justify-center">
        <svg width="24" height="24" viewBox="0 0 24 24">
          <circle cx="12" cy="12" r="12" fill="#3272b4" />
          <rect x="10" y="4" width="4" height="4" fill="#fff" />
          <rect x="10" y="10" width="4" height="10" fill="#fff" />
        </svg>
      </div>
    </div>
  );
}

function Segment({ w, children, full }: { w: string; children?: React.ReactNode; full?: boolean }) {
  return (
    <div className={`flex ${w} items-center whitespace-pre border-r-2 border-[#a0a4a8] ${full ? "" : "my-[4px]"}`}>{children}</div>
  );
}

function PersonIcon() {
  return (
    <svg width="20" height="26" viewBox="0 0 20 26">
      <circle cx="10" cy="8" r="6" fill="#dcdcdc" stroke="#5a5a5a" />
      <path d="M4 7c0-6 12-6 12 0l-6-2Z" fill="#555" />
      <path d="M2 24c0-7 4-9 8-9s8 2 8 9Z" fill="#777" />
      <path d="M8 15h4l-2 7Z" fill="#e8e8e8" />
    </svg>
  );
}

function StatusBar() {
  return (
    <div className="flex h-[50px] border-t-2 border-[#a0a4a8] bg-[#eff1f3] text-[#2a2a3a]">
      <Segment w="w-[120px]">
        <svg width="20" height="20" viewBox="0 0 20 20" className="ml-[17px] mr-[10px]">
          <circle cx="10" cy="10" r="9" fill="#f6f6f6" stroke="#666" strokeWidth="2" />
          <circle cx="10" cy="10" r="5" fill="#444" />
          <rect x="9" y="6" width="3" height="8" fill="#f0f0f0" />
        </svg>
        <span>DUEL</span>
      </Segment>
      <Segment w="w-[458px]">
        <div className="ml-[15px] mr-[9px]"><PersonIcon /></div>
        <span>CZSYSTEM-POHODA\ADMINISTRAT...</span>
      </Segment>
      <Segment w="w-[142px]">
        <div className="ml-[12px] mr-[11px]"><PersonIcon /></div>
        <span>Správce</span>
      </Segment>
      <Segment w="w-[523px]">
        <svg width="20" height="24" viewBox="0 0 20 24" className="ml-[14px] mr-[9px]">
          <path d="M3 11h14v12H3Z" fill="#c9c9c9" stroke="#666" />
          <path d="M10 1L1 12h3l6-7 6 7h3Z" fill="#777" />
        </svg>
        <span className="text-[#f00014]">Testovací firma,  Jméno Příjmení [Demover...</span>
      </Segment>
      <Segment w="w-[371px]"><span className="pl-[9px]">Otevření účetních knih: <span className={NUM}>01.01.20...</span></span></Segment>
      <Segment w="w-[275px]"><span className="pl-[8px]">Mzdové období: <span className={NUM}>11/2024</span></span></Segment>
      <Segment w="w-[61px]" full>
        <svg width="26" height="28" viewBox="0 0 26 28" className="ml-[14px]">
          <path d="M1 2l6 4 6-6 6 6 6-4v13c0 5-6 9-12 12C7 24 1 20 1 15Z" fill="#3fd28c" stroke="#1c8f58" />
        </svg>
      </Segment>
      <Segment w="w-[356px]" full />
      <div className="flex flex-1 items-center pl-[17px]">
        <svg width="32" height="34" viewBox="0 0 32 34" className="mr-[7px] mt-[2px]">
          <path d="M1 1h30v24H20l-4 5-4-5H1Z" fill="#fff" stroke="#a8a8a8" strokeWidth="2" />
        </svg>
        <span className="tracking-[-0.2px]">Nová oznámení: 0</span>
      </div>
    </div>
  );
}

export default function App() {
  return (
    <div className="flex h-[1520px] w-[2560px] flex-col overflow-hidden bg-white font-['Roboto',sans-serif] text-[24px]">
      <Gradients />
      <TitleBar />
      <MenuRow />
      <Ribbon />
      <TabStrip />
      <RecordBar />
      <FormPanel />
      <Splitter />
      <DetailTabs />
      <div className="flex h-[420px] flex-col border-x-2 border-[#c3d3e3] border-r-[#e0e6ee]">
        <TableHeader />
        <div className="flex h-[340px]">
          <div className="flex-1 overflow-hidden">
            <TableRow />
          </div>
          <ScrollColumn />
        </div>
        <HorizontalScroll />
      </div>
      <div className="flex h-[38px] items-center bg-[#fde6a6] pl-[4px] text-[#181820]">Datum zaúčtování účetního případu</div>
      <StatusBar />
    </div>
  );
}
